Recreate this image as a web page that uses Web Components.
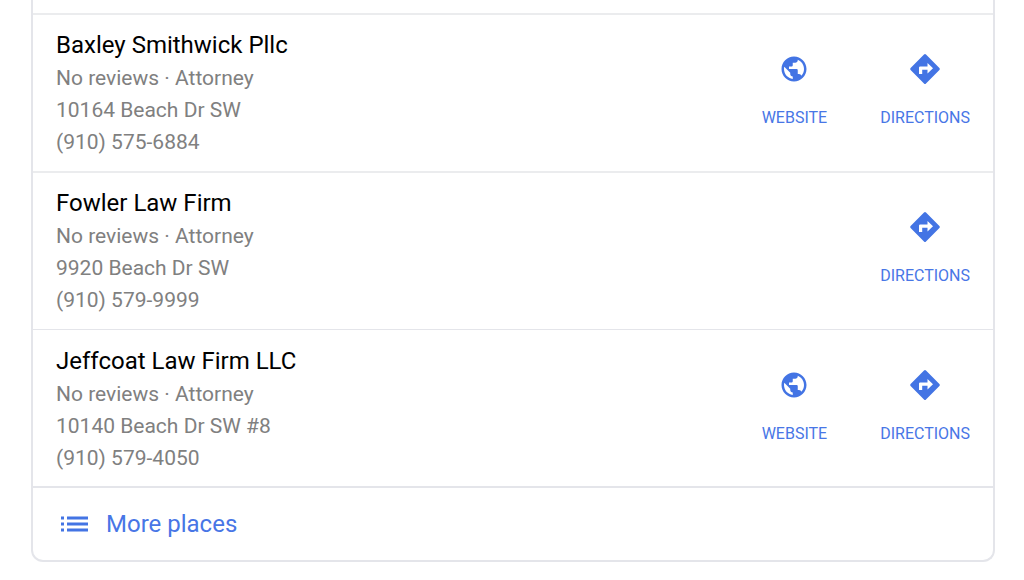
<!DOCTYPE html>
<html lang="en">
<head>
<meta charset="utf-8">
<title>Places</title>
<style>
body { margin: 0; background: #fff; font-family: Roboto, "Liberation Sans", sans-serif; }
</style>
</head>
<body>
<places-card>
  <place-row name="Baxley Smithwick Pllc" address="10164 Beach Dr SW" phone="(910) 575-6884">
    <place-action slot="actions" kind="website">Website</place-action>
    <place-action slot="actions" kind="directions">Directions</place-action>
  </place-row>
  <place-row name="Fowler Law Firm" address="9920 Beach Dr SW" phone="(910) 579-9999">
    <place-action slot="actions" kind="directions">Directions</place-action>
  </place-row>
  <place-row class="thin" name="Jeffcoat Law Firm LLC" address="10140 Beach Dr SW #8" phone="(910) 579-4050">
    <place-action slot="actions" kind="website">Website</place-action>
    <place-action slot="actions" kind="directions">Directions</place-action>
  </place-row>
  <more-places slot="footer">More places</more-places>
</places-card>
<script>
class PlacesCard extends HTMLElement {
  constructor() {
    super();
    this.attachShadow({ mode: 'open' }).innerHTML = `
      <style>
        :host { display: block; box-sizing: border-box; margin: 0 29px 0 31px; padding-top: 13px;
          border: 2px solid #e4e5ea; border-top: 0; border-radius: 0 0 12px 12px; }
      </style>
      <slot></slot><slot name="footer"></slot>`;
  }
}
class PlaceRow extends HTMLElement {
  constructor() {
    super();
    this.attachShadow({ mode: 'open' }).innerHTML = `
      <style>
        :host { display: flex; justify-content: space-between; box-sizing: border-box;
          border-top: 2px solid #ebecee; padding: 14px 23px 13px; }
        :host(.thin) { border-top-width: 1px; border-top-color: #e4e5ea; padding: 15px 23px 12px; }
        h2, p { margin: 0; font-weight: 400; }
        h2 { font-size: 24px; line-height: 33px; color: #000; }
        p { font-size: 21px; line-height: 32px; color: #808080; }
        .info { min-width: 0; }
        .actions { display: flex; gap: 53px; padding-top: 24px; }
      </style>
      <div class="info"><h2></h2><p>No reviews · Attorney</p><p class="address"></p><p class="phone"></p></div>
      <div class="actions"><slot name="actions"></slot></div>`;
  }
  connectedCallback() {
    const r = this.shadowRoot;
    r.querySelector('h2').textContent = this.getAttribute('name');
    r.querySelector('.address').textContent = this.getAttribute('address');
    r.querySelector('.phone').textContent = this.getAttribute('phone');
  }
}
const ICONS = {
  website: '<svg width="30" height="30" viewBox="0 0 24 24"><path d="M12 2C6.48 2 2 6.48 2 12s4.48 10 10 10 10-4.480 10-10S17.520 2 12 2zm-1 17.930c-3.950-.490-7-3.850-7-7.930 0-.620.080-1.210.210-1.790L9 15v1c0 1.100.900 2 2 2v1.930zm6.900-2.540c-.260-.810-1-1.390-1.900-1.390h-1v-3c0-.550-.450-1-1-1H8v-2h2c.550 0 1-.450 1-1V7h2c1.100 0 2-.900 2-2v-.410c2.930 1.190 5 4.060 5 7.410 0 2.080-.800 3.970-2.100 5.390z"/></svg>',
  directions: '<svg width="32" height="32" viewBox="0 0 32 32"><path d="M15 1.600q1-1 2 0L30.400 15q1 1 0 2L17 30.400q-1 1-2 0L1.600 17q-1-1 0-2zM10 21h3.200v-4.200h5.300v3.600l5.500-5.200-5.500-5.200v3.600H11.200q-1.200 0-1.200 1.200z" fill-rule="evenodd"/></svg>'
};
class PlaceAction extends HTMLElement {
  constructor() {
    super();
    this.attachShadow({ mode: 'open' }).innerHTML = `
      <style>
        :host { display: block; }
        a { display: flex; flex-direction: column; align-items: center; gap: 23px;
          color: #4876e6; text-decoration: none; text-transform: uppercase; font-size: 16px; line-height: 20px; }
        .icon { display: flex; align-items: center; height: 32px; }
        svg { display: block; fill: #4374e4; }
      </style>
      <a href="#"><span class="icon"></span><span><slot></slot></span></a>`;
  }
  connectedCallback() {
    this.shadowRoot.querySelector('.icon').innerHTML = ICONS[this.getAttribute('kind')];
  }
}
class MorePlaces extends HTMLElement {
  constructor() {
    super();
    this.attachShadow({ mode: 'open' }).innerHTML = `
      <style>
        :host { display: block; border-top: 2px solid #e4e5ea; }
        a { display: flex; align-items: center; gap: 18px; padding: 20px 27px; font-size: 24px; line-height: 32px;
          color: #4876e6; text-decoration: none; }
        svg { fill: #4374e4; }
      </style>
      <a href="#"><svg width="28" height="16" viewBox="0 0 28 16"><path d="M1 0.500h3v3H1zM1 6.500h3v3H1zM1 12.500h3v3H1zM7 0.500h21v3H7zM7 6.500h21v3H7zM7 12.500h21v3H7z"/></svg><slot></slot></a>`;
  }
}
customElements.define('places-card', PlacesCard);
customElements.define('place-row', PlaceRow);
customElements.define('place-action', PlaceAction);
customElements.define('more-places', MorePlaces);
</script>
</body>
</html>
